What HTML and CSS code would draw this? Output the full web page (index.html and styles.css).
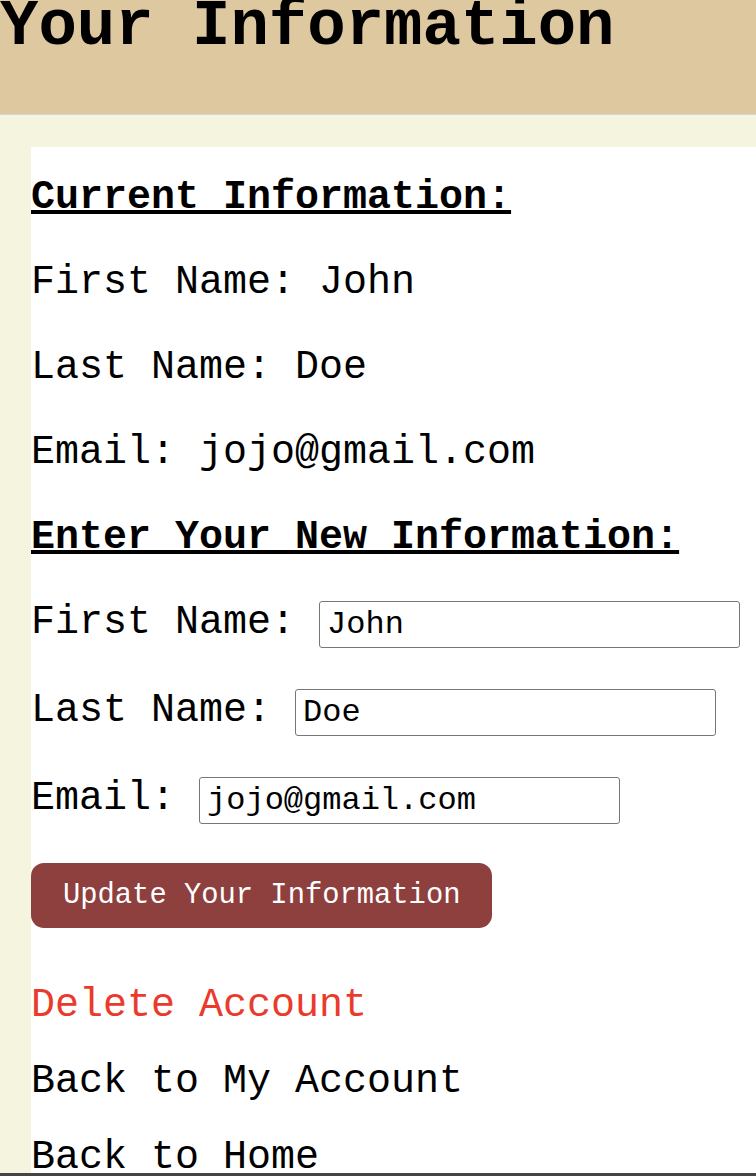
FILE: index.html
```html
<!DOCTYPE html>
<html lang="en">
<head>
<meta charset="utf-8">
<title>Your Information</title>
<link rel="stylesheet" href="styles.css">
</head>
<body>
<header class="top">
  <h1 class="title">Your Information</h1>
</header>
<main class="page">
  <section class="panel">
    <h2 class="section-head first">Current Information:</h2>
    <p class="line">First Name: John</p>
    <p class="line">Last Name: Doe</p>
    <p class="line">Email: jojo@gmail.com</p>
    <h2 class="section-head">Enter Your New Information:</h2>
    <form class="form">
      <div class="field"><label for="fn">First Name: </label><input id="fn" class="input" type="text" value="John"></div>
      <div class="field"><label for="ln">Last Name: </label><input id="ln" class="input" type="text" value="Doe"></div>
      <div class="field"><label for="em">Email: </label><input id="em" class="input" type="text" value="jojo@gmail.com"></div>
      <button type="button" class="btn">Update Your Information</button>
    </form>
    <a class="link danger" href="#">Delete Account</a>
    <a class="link" href="#">Back to My Account</a>
    <a class="link" href="#">Back to Home</a>
  </section>
</main>
<div class="bottom-edge"></div>
</body>
</html>
```

FILE: styles.css
```css
html, body {
  margin: 0;
  padding: 0;
}
body {
  background: #f5f4de;
  font-family: "Liberation Mono", "Courier New", monospace;
  color: #000;
  overflow: hidden;
  height: 1176px;
}
.top {
  background: #dec8a0;
  height: 114px;
  border-bottom: 1px solid #d4d4d4;
  overflow: hidden;
}
.title {
  margin: -9px 0 0 0;
  font-size: 64px;
  line-height: 72px;
  font-weight: bold;
}
.page {
  padding: 32px 0 0 31px;
}
.panel {
  background: #fff;
  display: flex;
  flex-direction: column;
  align-items: flex-start;
  padding-top: 28px;
  min-height: 1100px;
}
.section-head {
  margin: 40px 0 0 0;
  font-size: 40px;
  line-height: 45px;
  font-weight: bold;
  text-decoration: underline;
}
.section-head.first {
  margin-top: 0;
}
.line {
  margin: 40px 0 0 0;
  font-size: 40px;
  line-height: 45px;
  white-space: pre;
}
.form {
  display: flex;
  flex-direction: column;
  align-items: flex-start;
}
.field {
  margin-top: 40px;
  font-size: 40px;
  line-height: 45px;
  white-space: pre;
}
.input {
  box-sizing: border-box;
  width: 421px;
  height: 47px;
  padding: 0 7px;
  border: 1px solid #767676;
  border-radius: 3px;
  font-family: "Liberation Mono", "Courier New", monospace;
  font-size: 32px;
  color: #000;
  background: #fff;
  vertical-align: baseline;
}
.btn {
  margin-top: 39px;
  box-sizing: border-box;
  height: 65px;
  padding: 0 32px;
  border: none;
  border-radius: 13px;
  background: #8e403f;
  color: #fff;
  font-family: "Liberation Mono", "Courier New", monospace;
  font-size: 28.8px;
}
.link {
  display: block;
  margin-top: 31px;
  font-size: 40px;
  line-height: 45px;
  color: #000;
  text-decoration: none;
}
.link.danger {
  margin-top: 55px;
  color: #ea3a2c;
}
.bottom-edge {
  position: fixed;
  left: 0;
  right: 0;
  bottom: 0;
  height: 3px;
  background: #444;
}
```
